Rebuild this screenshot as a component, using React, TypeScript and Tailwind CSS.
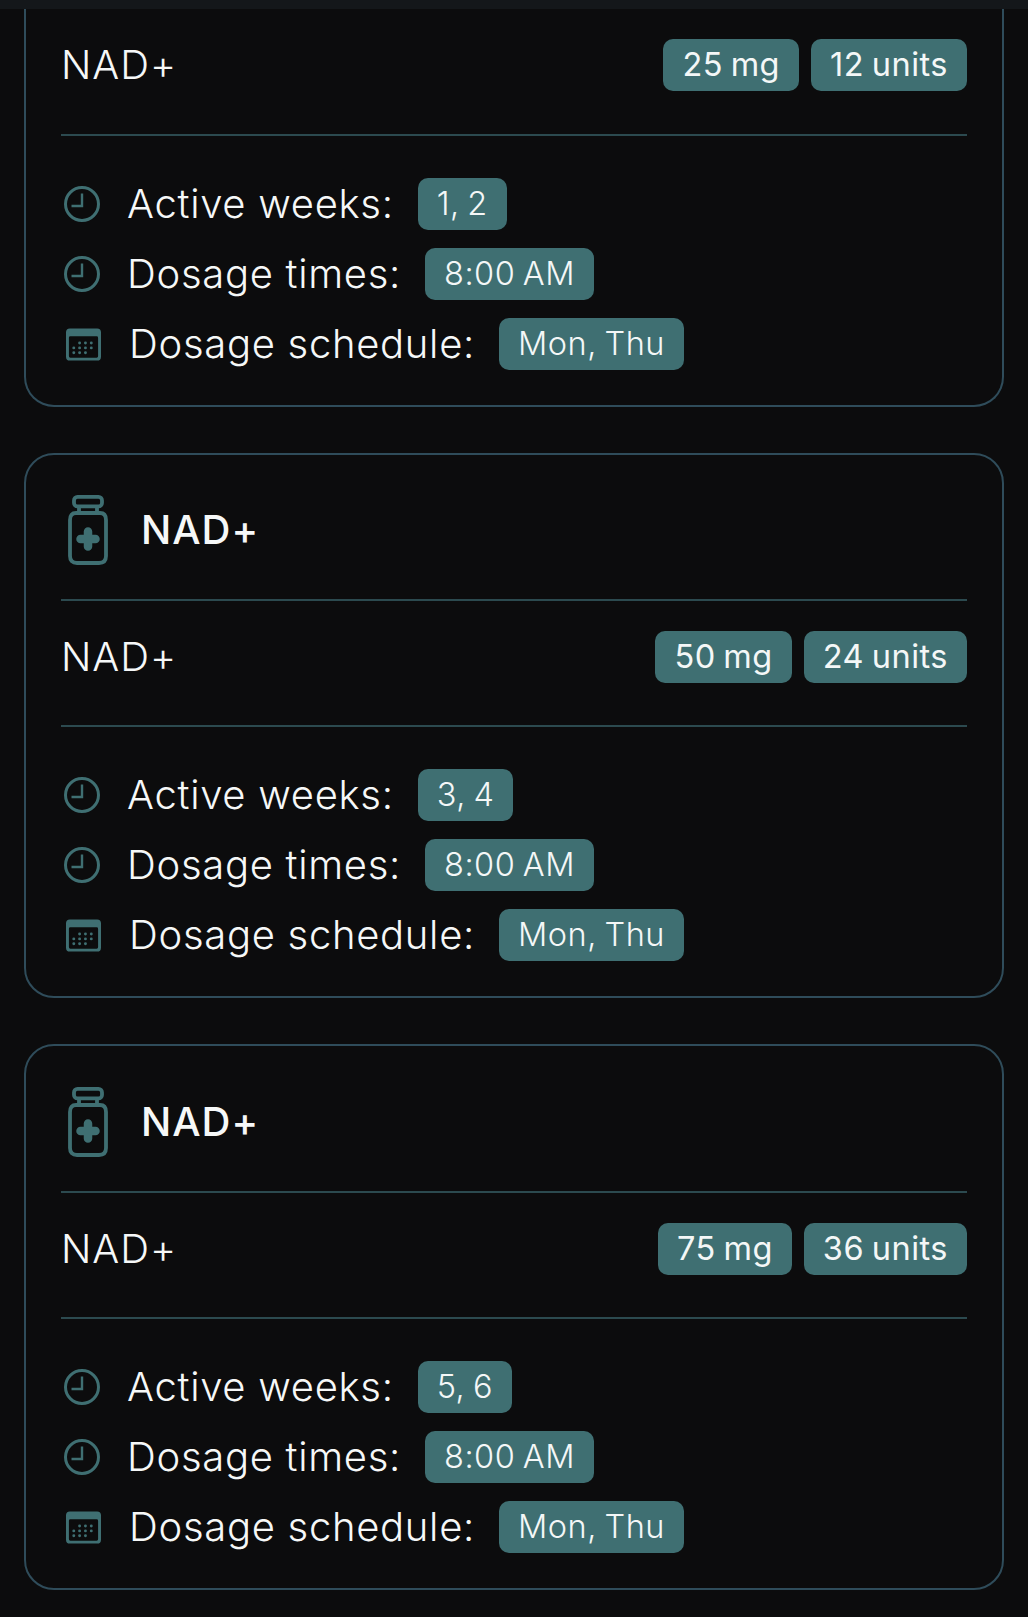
type Regimen = {
    mg: string,
    units: string,
    weeks: string
}

const regimens: Regimen[] = [
    { mg: "50 mg", units: "24 units", weeks: "3, 4" },
    { mg: "75 mg", units: "36 units", weeks: "5, 6" }
]

function ClockIcon() {
    return (
        <svg viewBox="0 0 36 36" className="w-9 h-9 shrink-0" fill="none" stroke="#3f6f72" strokeWidth="3">
            <circle cx="18" cy="18" r="16.500" />
            <path d="M18 7.500V20H7.500" strokeWidth="2.400" />
        </svg>
    )
}

function CalendarIcon() {
    const dots = [
        [14, 15], [20, 15], [26, 15],
        [8, 20], [14, 20], [20, 20], [26, 20],
        [8, 25], [14, 25], [20, 25]
    ]

    return (
        <svg viewBox="0 0 36 33" className="w-[35px] h-[33px] ml-[1.5px] shrink-0">
            <path fillRule="evenodd" fill="#3f6f72" d="M4 0h28a4 4 0 0 1 4 4v25a4 4 0 0 1-4 4H4a4 4 0 0 1-4-4V4a4 4 0 0 1 4-4zM4.500 8A1.500 1.500 0 0 0 3 9.500V28.500A1.500 1.500 0 0 0 4.500 30h27a1.500 1.500 0 0 0 1.500-1.500V9.500A1.500 1.500 0 0 0 31.500 8z" />
            {dots.map(([cx, cy]) => (
                <circle key={`${cx}-${cy}`} cx={cx} cy={cy} r="1.500" fill="#3f6f72" />
            ))}
        </svg>
    )
}

function BottleIcon() {
    return (
        <svg viewBox="0 0 40 70" className="w-10 h-[70px] shrink-0" fill="none" stroke="#3f6f72" strokeWidth="3.800">
            <rect x="6" y="1.900" width="28" height="9.500" rx="3.500" />
            <path d="M11 11v7M29 11v7" />
            <path d="M8 18h24q6 0 6 7v36q0 7-7 7H9q-7 0-7-7V25q0-7 6-7z" />
            <path d="M20 36.500v15M12.500 44h15" strokeWidth="8.500" strokeLinecap="round" />
        </svg>
    )
}

function Badge({ text }: { text: string }) {
    return (
        <span className="h-[52px] px-[19px] flex items-center rounded-[10px] bg-[#3f6f72] text-[#f4f7f7] text-[32.5px] leading-none tracking-[0.5px] [word-spacing:-2px] whitespace-nowrap">
            {text}
        </span>
    )
}

function DosageRow({ mg, units }: { mg: string, units: string }) {
    return (
        <div className="flex items-center justify-between">
            <span className="text-[40px] leading-none font-[350] tracking-[1px] text-[#f6f8f8]">NAD+</span>
            <div className="flex gap-3">
                <Badge text={mg} />
                <Badge text={units} />
            </div>
        </div>
    )
}

function Schedule({ weeks }: { weeks: string }) {
    return (
        <div className="mt-[42px] pl-[3px] flex flex-col gap-[18px] text-[40px] leading-none font-[350] tracking-[0.7px] text-[#f6f8f8]">
            <div className="flex items-center h-[52px]">
                <ClockIcon />
                <span className="ml-[27px] mr-[24px]">Active weeks:</span>
                <Badge text={weeks} />
            </div>
            <div className="flex items-center h-[52px]">
                <ClockIcon />
                <span className="ml-[27px] mr-[24px]">Dosage times:</span>
                <Badge text="8:00 AM" />
            </div>
            <div className="flex items-center h-[52px]">
                <CalendarIcon />
                <span className="ml-[28.5px] mr-[24px]">Dosage schedule:</span>
                <Badge text="Mon, Thu" />
            </div>
        </div>
    )
}

function Divider() {
    return <div className="h-[2px] bg-[#2c4a4f]" />
}

export default function App() {
    return (
        <div className="min-h-[1617px] bg-[#0c0c0d] font-['Inter',sans-serif]">
            <div className="h-[9px] bg-[#14171a]" />

            <div className="mx-6 px-[35px] pt-[30px] pb-[35px] border-2 border-t-0 border-[#2f4c5a] rounded-b-[30px]">
                <DosageRow mg="25 mg" units="12 units" />
                <div className="mt-[43px]"><Divider /></div>
                <Schedule weeks="1, 2" />
            </div>

            {regimens.map(regimen => (
                <div key={regimen.mg} className="mx-6 mt-[46px] px-[35px] pt-[40px] last:pt-[41px] pb-[35px] border-2 border-[#2f4c5a] rounded-[30px]">
                    <div className="flex items-center pl-[7px] gap-[33px]">
                        <BottleIcon />
                        <span className="text-[40px] leading-none font-medium tracking-[1px] text-[#f6f8f8]">NAD+</span>
                    </div>
                    <div className="mt-[34px] mb-[30px]"><Divider /></div>
                    <DosageRow mg={regimen.mg} units={regimen.units} />
                    <div className="mt-[42px]"><Divider /></div>
                    <Schedule weeks={regimen.weeks} />
                </div>
            ))}
        </div>
    )
}
